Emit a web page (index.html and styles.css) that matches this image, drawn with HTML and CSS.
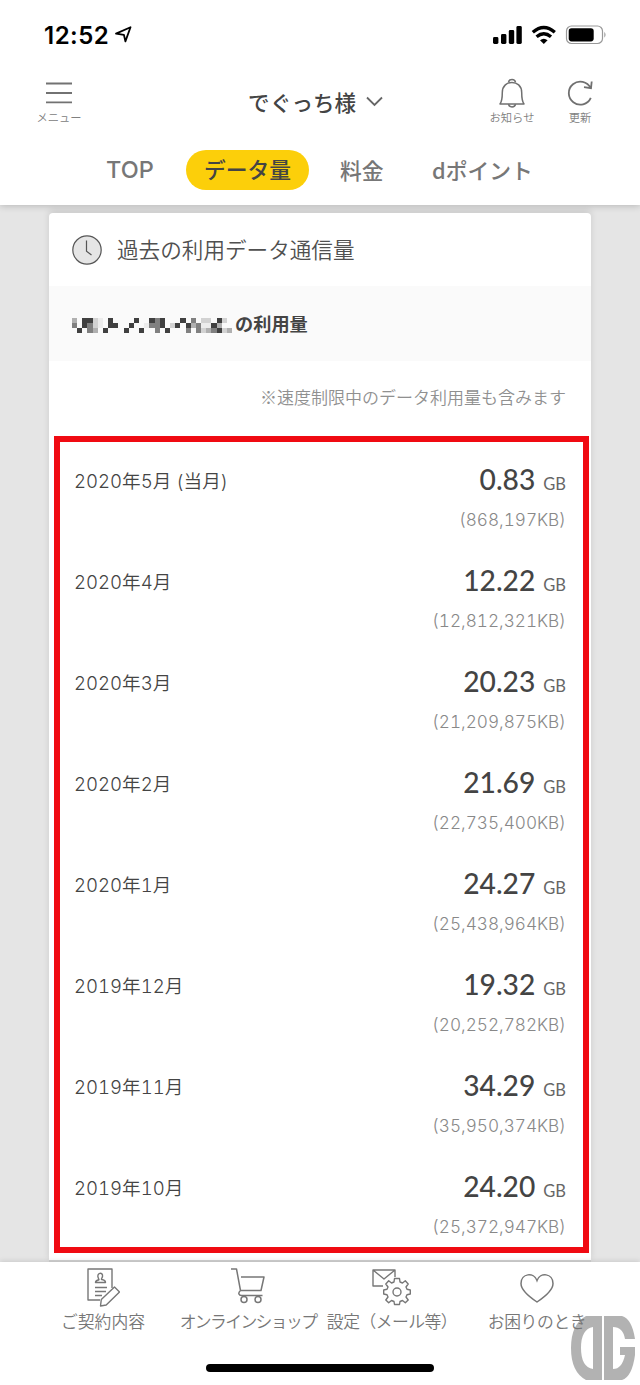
FILE: index.html
```
<!DOCTYPE html>
<html lang="ja">
<head>
<meta charset="utf-8">
<title>データ量</title>
<link rel="stylesheet" href="styles.css">
</head>
<body>
<div class="screen">
  <header class="header">
    <div class="status">
      <span class="clock">12:52</span>
      <svg class="location" width="17" height="17" viewBox="0 0 17 17"><path d="M1 7.6 15.5 1.2 10.4 15.4 8.9 8.8Z" fill="none" stroke="#000" stroke-width="1.8" stroke-linejoin="round"/></svg>
      <svg class="signals" width="114" height="20" viewBox="0 0 114 20">
        <rect x="0" y="12" width="5.4" height="7" rx="1.4"/><rect x="8" y="9" width="5.4" height="10" rx="1.4"/><rect x="15.8" y="5" width="5.4" height="14" rx="1.4"/><rect x="23.4" y="1" width="5.4" height="18" rx="1.4"/>
        <g fill="none" stroke="#000" stroke-width="3.4"><path d="M39.8 7.2q11-9.4 22 0"/><path d="M43.6 11.8q7.2-6 14.4 0"/></g><path d="M47 15.3q3.8-3 7.6 0L50.8 19Z"/>
        <rect x="73.5" y="1" width="36" height="17.5" rx="5" fill="none" stroke="#999" stroke-width="1.2"/><rect x="75.7" y="3.2" width="25" height="13.2" rx="2.8"/><path d="M111.3 6.8q2.5 3 0 6Z" fill="#999"/>
      </svg>
    </div>
    <div class="topbar">
      <div class="tool menu"><svg width="26" height="30" viewBox="0 0 26 30"><path d="M0 5.5h26M0 15h26M0 24.300h26" stroke="#727272" stroke-width="1.8"/></svg><span>メニュー</span></div>
      <div class="account">でぐっち様<svg width="17" height="11" viewBox="0 0 17 11"><path d="M1 1.5 8.5 9 16 1.5" fill="none" stroke="#666" stroke-width="1.8"/></svg></div>
      <div class="tool bell"><svg width="26" height="30" viewBox="0 0 26 30"><g fill="none" stroke="#707070" stroke-width="1.5"><path d="M9.500 4.300c.5-3.800 6.500-3.800 7 0"/><path d="M3.300 14.500C3.300 1 22.700 1 22.700 14.500c0 5 .4 9 2.300 11.500H1c1.900-2.500 2.300-6.500 2.300-11.500Z" stroke-linejoin="round"/><path d="M9.500 26.200c.5 3.600 6.500 3.600 7 0"/></g></svg><span>お知らせ</span></div>
      <div class="tool refresh"><svg width="26" height="30" viewBox="0 0 26 30"><path d="M23.800 19.800A11.500 11.500 0 1 1 23.600 10M24.700 3.500 24 10.200 17 9.200" fill="none" stroke="#707070" stroke-width="1.8"/></svg><span>更新</span></div>
    </div>
    <nav class="tabs"><span class="tab top">TOP</span><span class="tab active">データ量</span><span class="tab fee">料金</span><span class="tab point">dポイント</span></nav>
  </header>
  <main class="content">
    <section class="card">
      <h1 class="card-title"><svg width="30" height="30" viewBox="0 0 30 30"><g fill="none" stroke="#555" stroke-width="1.2"><circle cx="15" cy="15" r="14.2" fill="#e5e5e5"/><path d="M14.500 5.500v10.800l5 3.800"/></g></svg><span>過去の利用データ通信量</span></h1>
      <h2 class="user"><svg class="mosaic" width="160" height="15" viewBox="0 0 31 3" preserveAspectRatio="none" shape-rendering="crispEdges"><path stroke="#404040" d="M2 .5h2M7 .5h1M12 .5h1M15 .5h1M17 .5h1M21 .5h1M28 .5h1M2 1.5h1M7 1.5h2M11 1.5h1M17 1.5h1M20 1.5h1M22 1.5h1M27 1.5h1M1 2.5h1M6 2.5h1M10 2.5h1M13 2.5h1M18 2.5h1M28 2.5h1"/><path stroke="#808080" d="M16 .5h1M23 .5h1M0 1.5h1M3 1.5h1M15 1.5h2M24 1.5h1M3 2.5h1M16 2.5h1M22 2.5h1M24 2.5h1M27 2.5h1"/><path stroke="#b0b0b0" d="M0 .5h1M23 1.5h1M28 1.5h1M4 2.5h1M26 2.5h1M30 2.5h1"/><path stroke="#d2d2d2" d="M4 .5h1M25 .5h2M29 .5h1M19 1.5h1M4 1.5h1M25 2.5h1M29 2.5h1"/><path stroke="#ececec" d="M5 .5h1M5 1.5h1M14 1.5h1M25 1.5h2"/></svg><span>の利用量</span></h2>
      <p class="note">※速度制限中のデータ利用量も含みます</p>
      <ul class="usage">
        <li><span class="month">2020年5月 (当月)</span><div class="amount"><p><b>0.83</b><small>GB</small></p><em>(868,197KB)</em></div></li>
        <li><span class="month">2020年4月</span><div class="amount"><p><b>12.22</b><small>GB</small></p><em>(12,812,321KB)</em></div></li>
        <li><span class="month">2020年3月</span><div class="amount"><p><b>20.23</b><small>GB</small></p><em>(21,209,875KB)</em></div></li>
        <li><span class="month">2020年2月</span><div class="amount"><p><b>21.69</b><small>GB</small></p><em>(22,735,400KB)</em></div></li>
        <li><span class="month">2020年1月</span><div class="amount"><p><b>24.27</b><small>GB</small></p><em>(25,438,964KB)</em></div></li>
        <li><span class="month">2019年12月</span><div class="amount"><p><b>19.32</b><small>GB</small></p><em>(20,252,782KB)</em></div></li>
        <li><span class="month">2019年11月</span><div class="amount"><p><b>34.29</b><small>GB</small></p><em>(35,950,374KB)</em></div></li>
        <li><span class="month">2019年10月</span><div class="amount"><p><b>24.20</b><small>GB</small></p><em>(25,372,947KB)</em></div></li>
      </ul>
    </section>
  </main>
  <footer class="footer">
    <div class="link contract"><svg width="34" height="40" viewBox="0 0 34 40"><g fill="none" stroke="#777" stroke-width="1.4" stroke-linejoin="round"><path d="M14 33H2V2h24v19"/><path d="M12.500 11.500c-3-6 5-7 4-2-.4 2-1.500 2-1 3 3 .5 4 1.500 4 3H9.500c0-1.500 1-2.200 3.500-2.800Z"/><path d="M9 20.500h12M9 24.500h11M9 28.500h7"/><path d="m14.500 39 .8-6.500L28.500 20l5 5-13.300 13Z"/></g></svg><span>ご契約内容</span></div>
    <div class="link shop"><svg width="34" height="40" viewBox="0 0 34 40"><g fill="none" stroke="#777" stroke-width="1.5" stroke-linejoin="round"><path d="M0 2h5.500l4 21.500h20.500L33 10H10M9.500 23.500c-3 2.500-1.500 5 1 5h21"/><circle cx="13" cy="32.500" r="3"/><circle cx="27" cy="32.500" r="3"/></g></svg><span>オンラインショップ</span></div>
    <div class="link settings"><svg width="40" height="40" viewBox="0 0 40 40"><g fill="none" stroke="#777" stroke-width="1.4" stroke-linejoin="round"><path d="M11 19H1V3h22v7M1 3l11 9L23 3"/><path transform="translate(25 24.500)" d="M-3-9.500-2.500-13H2.500L3-9.500 5.500-8.500 8.300-10.700 11.200-7.500 9-4.500 10-2.200 13.300-1.500V2.500L10 3.200 9 5.500 11.200 8.500 8.300 11.300 5.500 9 3 10 2.500 13H-2.500L-3 10-5.500 9-8.300 11.300-11.200 8.500-9 5.500-10 3.200-13.300 2.500V-1.500L-10-2.200-9-4.500-11.200-7.500-8.300-10.700-5.500-8.500Z"/><circle cx="25" cy="25" r="4"/></g></svg><span>設定（メール等）</span></div>
    <div class="link help"><svg width="34" height="40" viewBox="0 0 34 40"><path d="M17 35C8 29 1 23 1 16.500 1 6 14 5 17 13.500 20 5 33 6 33 16.500 33 23 26 29 17 35Z" fill="none" stroke="#777" stroke-width="1.5"/></svg><span>お困りのとき</span></div>
    <div class="home-bar"></div>
  </footer>
  <div class="highlight"></div>
  <svg class="watermark" width="64" height="64" viewBox="0 0 64 64"><path fill="#777" fill-opacity=".57" fill-rule="evenodd" d="M31 0H15Q0 8 0 32t15 32h16ZM22 11v42Q10 51 10 32T22 11ZM33 0h18q10 3 13 23H54q-2-12-12-12v42q9 0 12-14h-5v-8h15v8q-3 22-13 25H33Z"/></svg>
</div>
</body>
</html>
```
FILE: styles.css
```
* { box-sizing: border-box; }
body { margin: 0; background: #fff; color: #444; font-family: "Noto Sans CJK JP", sans-serif; }
h1, h2, p, ul { margin: 0; padding: 0; }
svg { display: block; flex: none; }
.screen { position: relative; width: 640px; height: 1385px; overflow: hidden; display: flex; flex-direction: column; }
.header { position: relative; height: 205px; flex: none; background: #fff; box-shadow: 0 1px 7px rgba(0,0,0,.2); z-index: 1; }
.status { height: 70px; padding: 25px 33px 0 44px; display: flex; align-items: flex-start; }
.clock { font: 600 24px/22px Inter, sans-serif; letter-spacing: .5px; color: #000; width: 65px; white-space: nowrap; }
.location { margin: 1px 0 0 6px; }
.signals { margin-left: auto; }
.topbar { height: 75px; padding: 8px 30px 0 29px; display: flex; }
.tool { width: 60px; display: flex; flex-direction: column; align-items: center; font-size: 11.3px; line-height: 16px; color: #808080; font-weight: 350; white-space: nowrap; }
.tool span { margin-top: 1px; }
.account { margin-left: 159px; width: 136px; height: 46px; display: flex; align-items: center; gap: 10px; font-size: 21.5px; font-weight: 500; white-space: nowrap; }
.account svg { margin-top: 1px; }
.bell { margin-left: auto; }
.refresh { margin-left: 8px; }
.tabs { display: flex; height: 40px; margin-top: 5px; padding-left: 106px; align-items: center; color: #777; font-size: 21.8px; font-weight: 500; white-space: nowrap; line-height: 38px; }
.top { width: 80px; font-family: Inter, sans-serif; font-size: 23.5px; line-height: 40px; }
.active { width: 123px; height: 40px; border-radius: 20px; background: #fccf0a; color: #444; text-align: center; }
.fee { margin-left: 31px; width: 92px; }
.content { height: 1057px; flex: none; background: #e5e5e5; padding: 8px 49px 0; }
.card { height: 1049px; background: #fff; border-radius: 4px 4px 0 0; border-bottom: 2px solid #d2d2d2; box-shadow: 0 -3px 7px rgba(0,0,0,.11); }
.card-title { height: 73px; padding: 1px 0 0 23px; display: flex; align-items: center; gap: 15px; font-size: 21.6px; font-weight: 350; color: #505050; }
.card-title span { margin-top: -3px; }
.user { height: 75px; padding: 2px 0 0 23px; background: #fafafa; display: flex; align-items: center; gap: 3px; font-size: 18.2px; font-weight: 600; }
.user span { margin-top: -3px; }
.mosaic { margin-top: 1px; }
.note { height: 75px; padding-right: 25px; line-height: 72px; font-size: 17px; text-align: right; color: #909090; font-weight: 350; }
.usage { list-style: none; padding: 26px 25px 0; }
.usage li { height: 101px; display: flex; justify-content: space-between; color: #444; }
.month { font: 350 18.6px/28px Inter, "Noto Sans CJK JP", sans-serif; font-feature-settings: "tnum"; padding-top: 5px; }
.amount { text-align: right; }
.amount p { height: 42px; line-height: 34px; white-space: nowrap; }
.amount b { font: 500 28.2px/34px Lato, sans-serif; }
.amount small { font: 400 16.5px/34px Lato, sans-serif; color: #666; margin-left: 8px; }
.amount em { display: block; font: 300 17.2px/32px Inter, sans-serif; font-feature-settings: "tnum"; color: #888; }
.footer { position: relative; height: 123px; background: #fff; flex: none; display: grid; grid-template-columns: 206px 84px 204px 86px; padding-top: 5px; box-shadow: 0 -1px 5px rgba(0,0,0,.12); }
.link { display: flex; flex-direction: column; align-items: center; font-size: 16.8px; line-height: 24px; font-weight: 350; color: #777; white-space: nowrap; }
.link span { margin-top: 2px; }
.shop span { letter-spacing: -1.6px; }
.settings span { letter-spacing: -.5px; }
.help span { letter-spacing: -.4px; }
.home-bar { position: absolute; left: 206px; top: 102px; width: 228px; height: 8px; border-radius: 4px; background: #000; }
.highlight { position: absolute; left: 54px; top: 436px; width: 535px; height: 817px; border: 6px solid #f00a12; z-index: 2; }
.watermark { position: absolute; left: 571px; top: 1316px; z-index: 3; }
```
